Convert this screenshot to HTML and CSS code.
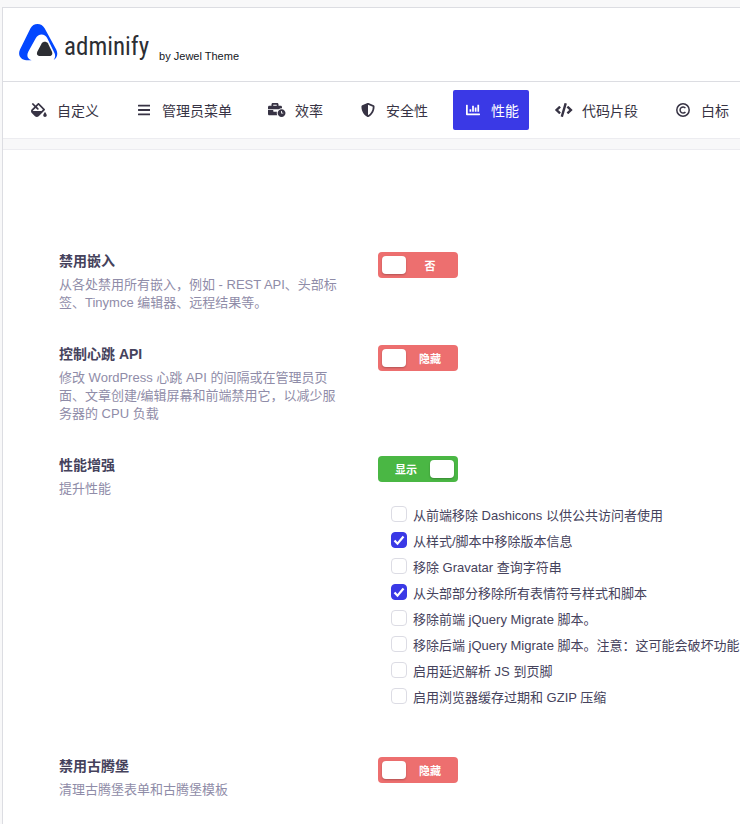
FILE: index.html
```html
<!DOCTYPE html>
<html lang="zh-CN">
<head>
    <meta charset="UTF-8">
    <meta name="viewport" content="width=device-width, initial-scale=1.0">
    <title>Adminify</title>
    <link rel="stylesheet" href="styles.css">
</head>
<body>
    <div class="panel">
        <header class="header">
            <svg class="logo" viewBox="0 0 39 37" aria-hidden="true">
                <path fill="#0347ff" d="M18.500 0C21.500 0 24 1.500 25.600 4.200L37.200 25.500C39.300 29.800 38.300 33.500 34.700 36C36 34.200 36.600 31.800 35.600 29.300L28.400 14.500C26 9.300 19.200 9.300 16.600 14.500L9.400 27.500C7.200 31.800 8.600 34.800 12.600 36.200H7.500C1.500 36.200-1.500 31 1 25.500L11.500 4.200C13 1.500 15.500 0 18.500 0Z"/>
                <path fill="#2c2e33" d="M22.800 19.200C24 17.200 27.600 17.200 28.900 19.200L32.900 27.500C34 30.300 32.800 32 30.300 32H21.300C18.300 32 17.200 30.300 18.400 27.500Z"/>
            </svg>
            <span class="brand">adminify</span>
            <span class="byline">by Jewel Theme</span>
        </header>

        <nav class="tabs">
            <a class="tab" href="#customize">
                <span class="tab-icon"><svg viewBox="0 0 576 512"><path d="M512 320s-64 92.650-64 128c0 35.350 28.660 64 64 64s64-28.650 64-64-64-128-64-128zm-9.370-102.940L294.940 9.370C288.690 3.120 280.500 0 272.310 0s-16.380 3.120-22.620 9.370l-81.580 81.580L81.930 4.760c-6.250-6.250-16.380-6.250-22.620 0L36.690 27.380c-6.240 6.250-6.240 16.380 0 22.620l86.190 86.180-94.760 94.760c-37.490 37.480-37.490 98.260 0 135.750l117.190 117.190c18.740 18.740 43.310 28.120 67.870 28.120 24.570 0 49.130-9.370 67.870-28.120l221.570-221.570c12.500-12.500 12.500-32.750.01-45.250zm-116.220 70.970H65.930c1.360-3.840 3.570-7.980 7.430-11.830l13.150-13.150 81.610-81.610 58.600 58.600c12.490 12.490 32.750 12.490 45.240 0s12.490-32.750 0-45.240l-58.600-58.600 58.950-58.950 162.440 162.440-48.340 48.340z"/></svg></span>自定义
            </a>
            <a class="tab" href="#menu">
                <span class="tab-icon"><svg viewBox="0 0 448 512"><path d="M16 60h416c9 0 16 7 16 16v40c0 9-7 16-16 16H16c-9 0-16-7-16-16V76c0-9 7-16 16-16zm0 160h416c9 0 16 7 16 16v40c0 9-7 16-16 16H16c-9 0-16-7-16-16v-40c0-9 7-16 16-16zm0 160h416c9 0 16 7 16 16v40c0 9-7 16-16 16H16c-9 0-16-7-16-16v-40c0-9 7-16 16-16z"/></svg></span>管理员菜单
            </a>
            <a class="tab" href="#productivity">
                <span class="tab-icon"><svg viewBox="0 0 640 512"><path d="M496 224c-79.590 0-144 64.410-144 144s64.410 144 144 144 144-64.410 144-144-64.410-144-144-144zm64 150.290c0 5.340-4.370 9.710-9.710 9.710h-60.570c-5.340 0-9.710-4.370-9.710-9.710v-76.570c0-5.340 4.370-9.710 9.710-9.710h12.570c5.340 0 9.710 4.370 9.710 9.710V352h38.290c5.340 0 9.710 4.370 9.710 9.710v12.580zM496 192c5.400 0 10.720.33 16 .81V144c0-25.600-22.400-48-48-48h-80V48c0-25.600-22.400-48-48-48H176c-25.600 0-48 22.400-48 48v48H48c-25.600 0-48 22.400-48 48v80h395.120c28.600-20.090 63.350-32 100.880-32zM320 96H192V64h128v32zm6.820 224H208c-8.840 0-16-7.160-16-16v-48H0v144c0 25.600 22.400 48 48 48h291.430C327.100 423.960 320 396.820 320 368c0-16.660 2.480-32.720 6.820-48z"/></svg></span>效率
            </a>
            <a class="tab" href="#security">
                <span class="tab-icon"><svg viewBox="0 0 512 512"><path d="M466.500 83.700l-192-80a48.150 48.150 0 0 0-36.900 0l-192 80C27.700 91.100 16 108.600 16 128c0 198.500 114.500 335.700 221.500 380.300 11.800 4.900 25.100 4.900 36.900 0C360.100 472.600 496 349.300 496 128c0-19.400-11.700-36.900-29.500-44.300zM256.100 446.300l-.1-381 175.900 73.300c-3.300 151.400-82.100 261.100-175.800 307.700z"/></svg></span>安全性
            </a>
            <a class="tab active" href="#performance">
                <span class="tab-icon"><svg viewBox="0 0 512 512"><path d="M332.800 320h38.400c6.400 0 12.800-6.400 12.800-12.800V172.800c0-6.400-6.400-12.800-12.800-12.800h-38.400c-6.400 0-12.800 6.400-12.800 12.800v134.400c0 6.400 6.400 12.800 12.800 12.800zm96 0h38.400c6.400 0 12.800-6.400 12.800-12.800V76.800c0-6.400-6.400-12.800-12.800-12.800h-38.400c-6.400 0-12.800 6.400-12.800 12.800v230.400c0 6.400 6.400 12.800 12.800 12.800zm-288 0h38.400c6.400 0 12.800-6.400 12.800-12.800v-70.400c0-6.400-6.400-12.800-12.800-12.800h-38.400c-6.400 0-12.800 6.400-12.800 12.800v70.400c0 6.400 6.400 12.800 12.800 12.800zm96 0h38.400c6.400 0 12.800-6.400 12.800-12.800V108.800c0-6.400-6.400-12.800-12.800-12.800h-38.400c-6.400 0-12.800 6.400-12.800 12.800v198.400c0 6.400 6.400 12.800 12.800 12.800zM496 384H64V80c0-8.840-7.160-16-16-16H16C7.160 64 0 71.160 0 80v336c0 17.670 14.330 32 32 32h464c8.840 0 16-7.160 16-16v-32c0-8.840-7.160-16-16-16z"/></svg></span>性能
            </a>
            <a class="tab" href="#snippets">
                <span class="tab-icon"><svg viewBox="0 0 640 512"><path d="M278.900 511.500l-61-17.700c-6.400-1.800-10-8.500-8.200-14.900L346.200 8.700c1.800-6.400 8.500-10 14.900-8.200l61 17.700c6.400 1.800 10 8.500 8.200 14.900L293.800 503.300c-1.900 6.400-8.500 10.100-14.900 8.200zm-114-112.200l43.500-46.400c4.600-4.900 4.300-12.700-.8-17.200L117 256l90.600-79.700c5.100-4.500 5.500-12.300.8-17.200l-43.500-46.400c-4.500-4.800-12.100-5.100-17-.5L3.800 247.200c-5.100 4.700-5.100 12.800 0 17.500l144.100 135.100c4.900 4.600 12.500 4.400 17-.5zm327.200.6l144.100-135.100c5.100-4.700 5.100-12.800 0-17.500L492.100 112.100c-4.800-4.500-12.400-4.300-17 .5L431.600 159c-4.600 4.900-4.300 12.700.8 17.200L523 256l-90.600 79.700c-5.100 4.500-5.500 12.300-.8 17.200l43.500 46.400c4.500 4.900 12.100 5.100 17 .6z"/></svg></span>代码片段
            </a>
            <a class="tab" href="#white-label">
                <span class="tab-icon"><svg viewBox="0 0 14 14"><circle class="line" cx="7" cy="7" r="6.200"/><path class="line" d="M9.400 8.900a3 3 0 1 1 0-3.800"/></svg></span>白标
            </a>
        </nav>

        <main class="settings">
            <section class="field">
                <div class="field-info">
                    <h2>禁用嵌入</h2>
                    <p>从各处禁用所有嵌入，例如 - REST API、头部标签、Tinymce 编辑器、远程结果等。</p>
                </div>
                <div class="field-control">
                    <label class="switch"><input type="checkbox" role="switch"><span>否</span></label>
                </div>
            </section>

            <section class="field">
                <div class="field-info">
                    <h2>控制心跳 API</h2>
                    <p>修改 WordPress 心跳 API 的间隔或在管理员页面、文章创建/编辑屏幕和前端禁用它，以减少服务器的 CPU 负载</p>
                </div>
                <div class="field-control">
                    <label class="switch"><input type="checkbox" role="switch"><span>隐藏</span></label>
                </div>
            </section>

            <section class="field">
                <div class="field-info">
                    <h2>性能增强</h2>
                    <p>提升性能</p>
                </div>
                <div class="field-control">
                    <label class="switch on"><input type="checkbox" role="switch" checked><span>显示</span></label>
                    <ul class="checklist">
                        <li><label><input type="checkbox">从前端移除 Dashicons 以供公共访问者使用</label></li>
                        <li><label><input type="checkbox" checked>从样式/脚本中移除版本信息</label></li>
                        <li><label><input type="checkbox">移除 Gravatar 查询字符串</label></li>
                        <li><label><input type="checkbox" checked>从头部部分移除所有表情符号样式和脚本</label></li>
                        <li><label><input type="checkbox">移除前端 jQuery Migrate 脚本。</label></li>
                        <li><label><input type="checkbox">移除后端 jQuery Migrate 脚本。注意：这可能会破坏功能</label></li>
                        <li><label><input type="checkbox">启用延迟解析 JS 到页脚</label></li>
                        <li><label><input type="checkbox">启用浏览器缓存过期和 GZIP 压缩</label></li>
                    </ul>
                </div>
            </section>

            <section class="field">
                <div class="field-info">
                    <h2>禁用古腾堡</h2>
                    <p>清理古腾堡表单和古腾堡模板</p>
                </div>
                <div class="field-control">
                    <label class="switch"><input type="checkbox" role="switch"><span>隐藏</span></label>
                </div>
            </section>
        </main>
    </div>
</body>
</html>
```

FILE: styles.css
```css
* {
    box-sizing: border-box;
}
body {
    margin: 0;
    padding: 7px 0 0 2px;
    background-color: #f8f8f9;
    font-family: "Liberation Sans", Arial, "Noto Sans CJK SC", sans-serif;
    font-size: 13px;
    color: #4b4862;
    overflow-x: hidden;
}
.panel {
    border: 1px solid #dcdde2;
    border-width: 1px 0 0 1px;
    min-height: calc(100vh - 7px);
    display: flex;
    flex-direction: column;
}

/* header */
.header {
    display: flex;
    align-items: flex-start;
    height: 74px;
    padding: 16px;
    background-color: #fff;
    border-bottom: 1px solid #dcdde2;
}
.logo {
    width: 39px;
    height: 37px;
    flex: none;
}
.brand {
    margin-left: 6px;
    font-family: "Roboto Condensed", "Liberation Sans Narrow", "DejaVu Sans Condensed", sans-serif;
    font-size: 25px;
    line-height: 46px;
    color: #2c2e33;
}
.byline {
    margin: 24px 0 0 10px;
    font-size: 11px;
    line-height: 16px;
    color: #14161c;
    white-space: nowrap;
}

/* tabs */
.tabs {
    display: flex;
    gap: 15px;
    padding: 8px 0 8px 16px;
    background-color: #fff;
    border-bottom: 1px solid #ececf0;
}
.tab {
    display: flex;
    align-items: center;
    flex: none;
    height: 40px;
    padding: 0 10px 0 12px;
    border-radius: 2px;
    font-size: 14px;
    color: #373344;
    text-decoration: none;
}
.tab.active {
    background-color: #3a39e6;
    color: #fff;
}
.tab-icon {
    display: flex;
    justify-content: center;
    width: 16px;
    margin-right: 10px;
}
.tab-icon svg {
    flex: none;
    height: 14px;
    fill: currentColor;
}
.tab-icon .line {
    fill: none;
    stroke: currentColor;
    stroke-width: 1.5;
}

/* settings */
.settings {
    flex: 1;
    display: flex;
    flex-direction: column;
    gap: 33px;
    margin-top: 10px;
    padding: 102px 0 32px 56px;
    background-color: #fff;
    border-top: 1px solid #ececf0;
}
.field {
    display: grid;
    grid-template-columns: 285px 1fr;
    gap: 34px;
}
.field h2 {
    margin: 0 0 6px;
    font-size: 14px;
    line-height: 18px;
    font-weight: bold;
    color: #45425c;
}
.field p {
    margin: 0;
    line-height: 18px;
    color: #8f8ca8;
}

.switch {
    display: flex;
    align-items: center;
    width: 80px;
    height: 26px;
    padding: 4px;
    border-radius: 4px;
    background-color: #ed6f6f;
    color: #fff;
    font-size: 11px;
    font-weight: bold;
    cursor: pointer;
}
.switch.on {
    flex-direction: row-reverse;
    background-color: #4ab744;
}
.switch input {
    appearance: none;
    width: 24px;
    height: 18px;
    margin: 0;
    border-radius: 4px;
    background-color: #fff;
    box-shadow: 0 1px 2px rgba(0, 0, 0, 0.25);
}
.switch span {
    flex: 1;
    text-align: center;
}

.checklist {
    margin: 19px 0 0;
    padding: 0 0 15px 13px;
    list-style: none;
}
.checklist label {
    display: flex;
    align-items: center;
    gap: 6px;
    height: 26px;
    white-space: nowrap;
    color: #45425c;
}
.checklist input {
    appearance: none;
    width: 16px;
    height: 16px;
    margin: 0;
    border: 1px solid #dcdce4;
    border-radius: 4px;
    background: #fff;
}
.checklist input:checked {
    border-color: #3a39e6;
    background: #3a39e6 url("data:image/svg+xml,%3Csvg xmlns='http://www.w3.org/2000/svg' viewBox='0 0 14 14'%3E%3Cpath d='M2.500 7.500l3 3.200 6-7.200' fill='none' stroke='%23fff' stroke-width='2.200'/%3E%3C/svg%3E") center / 14px no-repeat;
}
```
